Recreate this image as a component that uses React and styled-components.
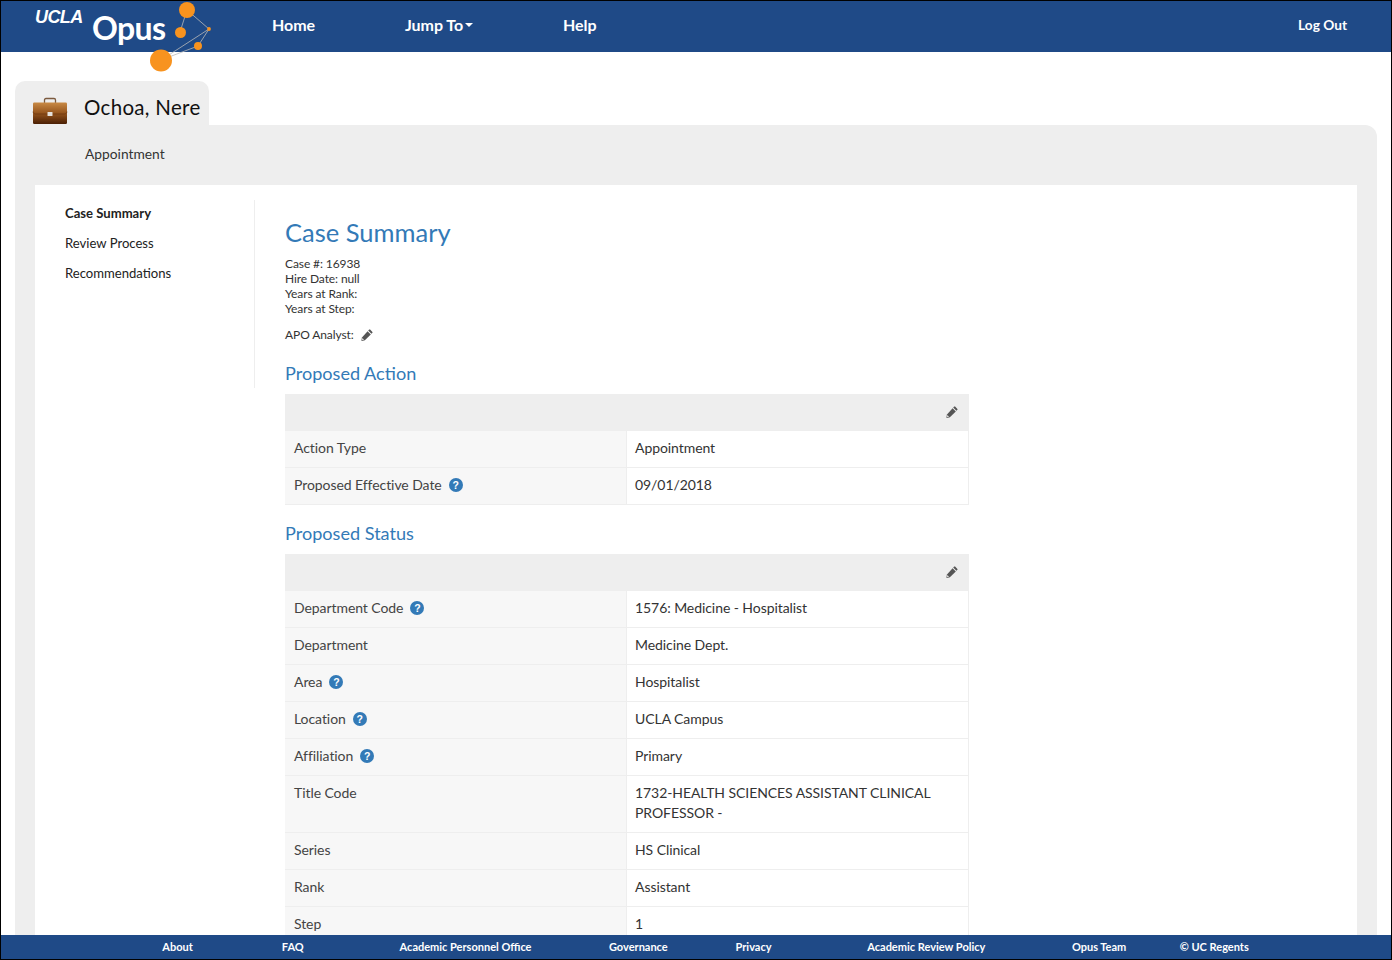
import React from "react";
import styled, { createGlobalStyle } from "styled-components";

const Global = createGlobalStyle`
  html, body { margin: 0; padding: 0; background: #fff; }
  * { box-sizing: border-box; }
`;
const FONT = `"Lato", "Open Sans", "Liberation Sans", sans-serif`;

const Page = styled.div`
  width: 1392px; height: 960px; display: flex; flex-direction: column;
  border: 1px solid #000; overflow: hidden;
  font-family: ${FONT}; color: #333; background: #fff; position: relative;
`;
const Navbar = styled.header`
  flex: 0 0 51px; background: #1f4a87; display: flex; align-items: center;
  padding: 0 44px 5px 271px; position: relative; z-index: 2; color: #fff;
`;
const LogoWrap = styled.div`
  position: absolute; left: 0; top: 0; width: 220px; height: 75px;
`;
const LogoArt = styled.svg`position: absolute; left: 0; top: 0;`;
const Ucla = styled.span`
  position: absolute; left: 34px; top: 4px; font: italic 700 18px/24px "Liberation Sans", sans-serif;
  letter-spacing: -0.6px; color: #fff;
`;
const Opus = styled.span`
  position: absolute; left: 91px; top: 7px; font: 700 32px/40px ${FONT}; color: #fff; letter-spacing: -0.6px;
`;
const NavList = styled.nav`display: flex; gap: 90px; flex: 1; font-size: 16px; font-weight: 700; letter-spacing: -0.05px;`;
const NavLink = styled.a`display: inline-flex; align-items: center;`;
const Caret = styled.span`
  display: inline-block; width: 0; height: 0; margin-left: 2px; margin-top: 2px;
  border-left: 4px solid transparent; border-right: 4px solid transparent; border-top: 4px solid #fff;
`;
const LogOut = styled.a`font-size: 13.7px; font-weight: 700;`;

const Main = styled.main`flex: 1; min-height: 0; overflow: hidden; padding: 29px 14px 0;`;
const Tab = styled.div`
  width: 194px; height: 44px; background: #eee; border-radius: 10px 10px 0 0;
  display: flex; align-items: center; padding: 8px 0 0 17px; gap: 16px;
`;
const CaseIcon = styled.svg`flex: none; margin-top: 8px;`;
const Name = styled.h2`margin: 0; font-size: 20.5px; font-weight: 400; color: #111; letter-spacing: 0.3px; white-space: nowrap;`;
const Panel = styled.section`
  background: #eee; border-radius: 0 12px 0 0; padding: 0 20px;
`;
const CaseType = styled.div`height: 60px; padding: 20px 0 0 50px; font-size: 13.8px; line-height: 18px; color: #333;`;
const White = styled.div`background: #fff; padding-top: 15px; display: flex; height: 900px; align-items: flex-start;`;
const Side = styled.aside`
  width: 220px; height: 188px; border-right: 1px solid #eee; padding: 0 0 0 30px;
  display: flex; flex-direction: column;
`;
const SideLink = styled.a`
  height: 30px; line-height: 26px; font-size: 13.1px; color: #222; font-weight: ${p => (p.$active ? 700 : 400)};
`;
const Content = styled.div`padding-left: 30px; width: 714px;`;
const Title = styled.h1`margin: 17px 0 0; font-size: 25.5px; line-height: 30px; font-weight: 400; color: #337ab7;`;
const Meta = styled.div`margin-top: 9px; font-size: 12px; line-height: 15px; color: #333; letter-spacing: -0.1px;`;
const Analyst = styled.div`
  margin-top: 11px; font-size: 12px; line-height: 15px; color: #333; display: flex; align-items: center; gap: 7px; letter-spacing: -0.1px;
`;
const Section = styled.h3`margin: 0; font-size: 18.1px; line-height: 24px; font-weight: 400; color: #337ab7;`;
const SectionFirst = styled(Section)`margin-top: 19px;`;
const SectionNext = styled(Section)`margin-top: 16px;`;
const Table = styled.div`margin-top: 9px; width: 684px; border-right: 1px solid #eee;`;
const TableHead = styled.div`
  height: 37px; background: #eee; display: flex; align-items: center; justify-content: flex-end; padding: 0 10px 2px 0;
`;
const Row = styled.div`
  display: grid; grid-template-columns: 342px 1fr; border-bottom: 1px solid #eee; font-size: 14px; line-height: 20px; letter-spacing: -0.07px;
`;
const Label = styled.div`
  background: #f7f7f7; padding: 7px 9px 9px; border-right: 1px solid #eee; color: #444; display: flex; align-items: flex-start; gap: 7px;
`;
const Value = styled.div`padding: 7px 8px 9px; color: #333;`;
const Help = styled.span`
  flex: none; width: 14px; height: 14px; margin-top: 3px; border-radius: 50%; background: #337ab7; color: #fff;
  font: 700 10.5px/14px "Liberation Sans", sans-serif; text-align: center; letter-spacing: 0;
`;
const Footer = styled.footer`
  flex: 0 0 24px; background: #1f4a87; color: #fff; display: grid; grid-template-columns: repeat(12, 115.2px);
  padding: 0 0 2px 3.8px;
  align-items: center; font-size: 11px; font-weight: 700; position: relative; z-index: 2;
`;
const FootLink = styled.a`
  text-align: center; grid-column: span ${p => p.$span || 1}; white-space: nowrap;
  &:first-child { grid-column: 2 / span 1; }
`;

const Pencil = ({ size = 12 }) => (
  <svg width={size} height={size} viewBox="0 0 12 12" aria-hidden="true">
    <path d="M9.1.6l2.3 2.3c.3.3.3.6 0 .9l-1 1-3.2-3.2 1-1c.3-.3.6-.3.9 0z" fill="#555" />
    <path d="M6.6 2.2l3.2 3.2-5.9 5.9-3 .6-.5-.5.6-3z" fill="#555" />
    <path d="M1.3 8.9l1.8 1.8-2.2.5z" fill="#ddd" />
  </svg>
);

const Briefcase = () => (
  <CaseIcon width="36" height="28" viewBox="0 0 36 28" aria-hidden="true">
    <defs>
      <linearGradient id="bc" x1="0" y1="0" x2="0" y2="1">
        <stop offset="0" stopColor="#c98a45" />
        <stop offset="0.5" stopColor="#95541c" />
        <stop offset="1" stopColor="#4a1f04" />
      </linearGradient>
    </defs>
    <path d="M12.500 6V3C12.500 2 13 1.500 14 1.500h8C23 1.500 23.500 2 23.500 3v3" fill="none" stroke="#7b5a3f" strokeWidth="1.300" />
    <rect x="1" y="5.500" width="34" height="21.500" rx="1.200" fill="url(#bc)" />
    <path d="M1 14.500c0 1.500 1 2.200 2.500 2.500h29c1.500-.3 2.500-1 2.500-2.500" fill="none" stroke="#5a2a08" strokeWidth=".5" />
    <rect x="15.500" y="15" width="5" height="4" rx=".5" fill="#e6e2dc" />
  </CaseIcon>
);

const Logo = () => (
  <LogoWrap>
    <LogoArt width="220" height="75" viewBox="0 0 220 75" aria-hidden="true">
      <g stroke="#b9b9b9" strokeWidth="0.8" fill="none">
        <path d="M186 9L208 28M186 9L179 31M208 28L160 59M208 28L197 45M197 45L160 59" />
      </g>
      <g fill="#f8931f">
        <circle cx="186" cy="9" r="8" />
        <circle cx="179.500" cy="31.500" r="5.500" />
        <circle cx="208" cy="28" r="1.900" />
        <circle cx="197" cy="45" r="4" />
        <circle cx="160" cy="59.500" r="11" />
      </g>
    </LogoArt>
    <Ucla>UCLA</Ucla>
    <Opus>Opus</Opus>
  </LogoWrap>
);

const Q = () => <Help>?</Help>;

const Rows = ({ rows }) =>
  rows.map(([l, v, h]) => (
    <Row key={l}>
      <Label>{l}{h && <Q />}</Label>
      <Value>{v}</Value>
    </Row>
  ));

export default function App() {
  return (
    <Page>
      <Global />
      <Navbar>
        <Logo />
        <NavList>
          <NavLink>Home</NavLink>
          <NavLink>Jump To<Caret /></NavLink>
          <NavLink>Help</NavLink>
        </NavList>
        <LogOut>Log Out</LogOut>
      </Navbar>
      <Main>
        <Tab>
          <Briefcase />
          <Name>Ochoa, Nere</Name>
        </Tab>
        <Panel>
          <CaseType>Appointment</CaseType>
          <White>
            <Side>
              <SideLink $active>Case Summary</SideLink>
              <SideLink>Review Process</SideLink>
              <SideLink>Recommendations</SideLink>
            </Side>
            <Content>
              <Title>Case Summary</Title>
              <Meta>
                <div>Case #: 16938</div>
                <div>Hire Date: null</div>
                <div>Years at Rank:</div>
                <div>Years at Step:</div>
              </Meta>
              <Analyst>APO Analyst: <Pencil /></Analyst>
              <SectionFirst>Proposed Action</SectionFirst>
              <Table>
                <TableHead><Pencil /></TableHead>
                <Rows rows={[
                  ["Action Type", "Appointment"],
                  ["Proposed Effective Date", "09/01/2018", true],
                ]} />
              </Table>
              <SectionNext>Proposed Status</SectionNext>
              <Table>
                <TableHead><Pencil /></TableHead>
                <Rows rows={[
                  ["Department Code", "1576: Medicine - Hospitalist", true],
                  ["Department", "Medicine Dept."],
                  ["Area", "Hospitalist", true],
                  ["Location", "UCLA Campus", true],
                  ["Affiliation", "Primary", true],
                  ["Title Code", "1732-HEALTH SCIENCES ASSISTANT CLINICAL PROFESSOR -"],
                  ["Series", "HS Clinical"],
                  ["Rank", "Assistant"],
                  ["Step", "1"],
                ]} />
              </Table>
            </Content>
          </White>
        </Panel>
      </Main>
      <Footer>
        <FootLink>About</FootLink>
        <FootLink>FAQ</FootLink>
        <FootLink $span={2}>Academic Personnel Office</FootLink>
        <FootLink>Governance</FootLink>
        <FootLink>Privacy</FootLink>
        <FootLink $span={2}>Academic Review Policy</FootLink>
        <FootLink>Opus Team</FootLink>
        <FootLink>© UC Regents</FootLink>
      </Footer>
    </Page>
  );
}
